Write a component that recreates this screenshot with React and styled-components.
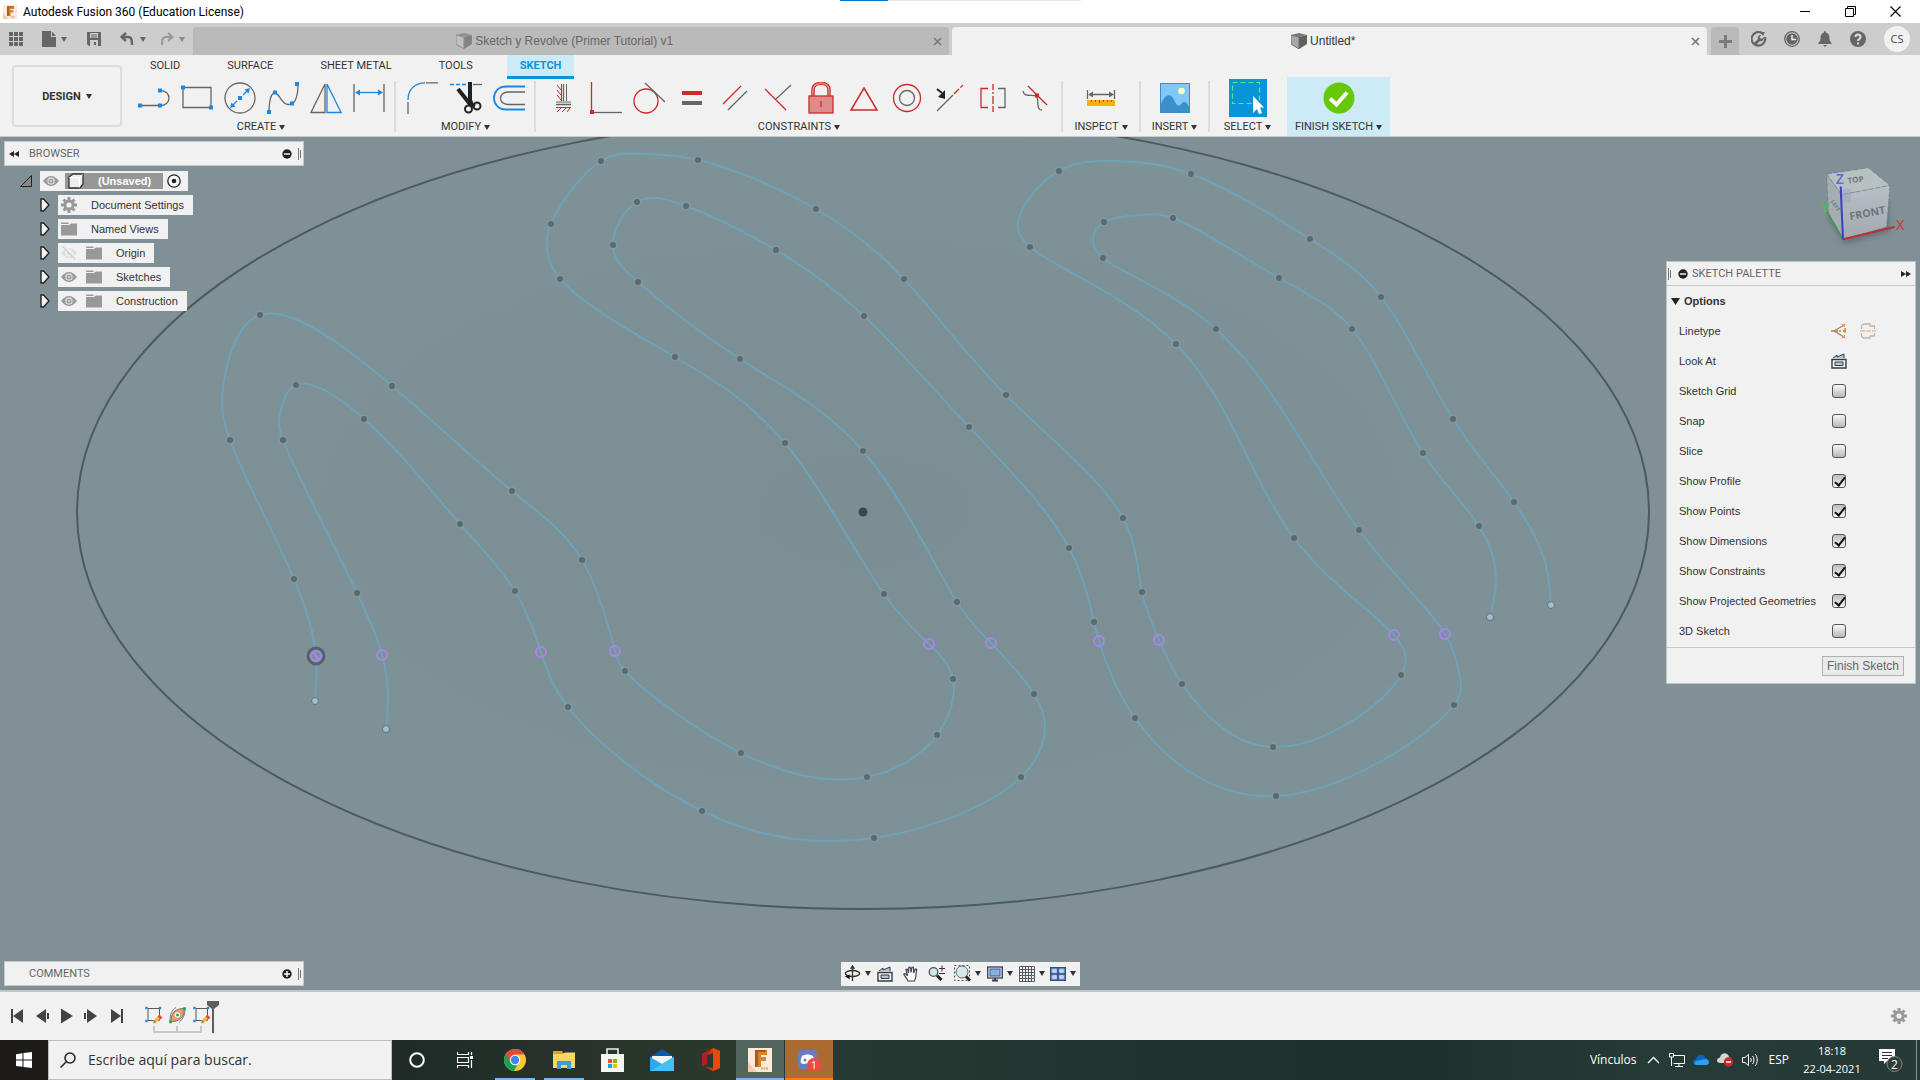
import React from "react";
import styled, { createGlobalStyle, css } from "styled-components";

const ui = '"Liberation Sans", Arial, sans-serif';
const caps = 'Roboto, "Liberation Sans", sans-serif';
const segoe = '"Open Sans", "Noto Sans", sans-serif';

const GlobalStyle = createGlobalStyle`
  * { box-sizing: border-box; }
  body { margin: 0; background: #f1f1f1; font-family: ${ui}; font-size: 11px; color: #333; }
  svg { display: block; flex: none; }
`;

const plainButton = css`
  appearance: none;
  border: 0;
  padding: 0;
  margin: 0;
  background: none;
  color: inherit;
  font: inherit;
  cursor: pointer;
`;

const Shell = styled.div`
  display: flex;
  flex-direction: column;
  height: 100vh;
  min-height: 720px;
  overflow: hidden;
`;

/* ---------- generic pieces ---------- */

const Svg = ({ w = 16, h = w, vw = w, vh = h, children, ...rest }) => (
  <svg width={w} height={h} viewBox={`0 0 ${vw} ${vh}`} fill="none" aria-hidden="true" {...rest}>
    {children}
  </svg>
);

const IconButton = styled.button`
  ${plainButton}
  display: flex;
  align-items: center;
  justify-content: center;
  width: ${(p) => p.$w || 16}px;
  height: ${(p) => p.$h || 16}px;
`;

const Caret = styled.span`
  display: inline-block;
  flex: none;
  border: solid transparent;
  border-width: 5px 3px 0;
  border-top-color: ${(p) => p.$color || "#333"};
`;

/* ---------- window title bar ---------- */

const TitleBar = styled.header`
  display: flex;
  align-items: center;
  flex: none;
  position: relative;
  height: 23px;
  padding: 0 17px 0 3px;
  background: #fff;
  color: #000;
`;

const TitleText = styled.h1`
  flex: 1;
  margin: 0 0 0 6px;
  font: 12px/16px ${caps};
`;

const WindowButtons = styled.div`
  display: flex;
  gap: 29px;
`;

const LoadStrip = styled.div`
  position: absolute;
  top: 0;
  left: 840px;
  width: 241px;
  height: 1px;
  background: linear-gradient(90deg, #0078d7 48px, #e5e5e5 48px);
`;

/* ---------- document tabs ---------- */

const TabBar = styled.nav`
  display: flex;
  flex: none;
  height: 32px;
  background: #cdcdcd;
`;

const QuickAccess = styled.div`
  display: flex;
  align-items: center;
  flex: none;
  width: 193px;
  padding: 0 0 0 8px;
`;

const QuickGap = styled.span`
  width: ${(p) => p.$w}px;
`;

const DocTab = styled.div`
  display: flex;
  flex: 1;
  align-items: center;
  margin: 4px 3px 0 0;
  padding: 0 7px 0 4px;
  border-radius: 4px 4px 0 0;
  background: ${(p) => (p.$active ? "#f1f1f1" : "#bababa")};
  color: ${(p) => (p.$active ? "#333" : "#666")};
`;

const DocName = styled.button`
  ${plainButton}
  display: flex;
  flex: 1;
  align-items: center;
  justify-content: center;
  gap: 3px;
  font-size: 12px;
  line-height: 16px;
`;

const NewTab = styled.button`
  ${plainButton}
  display: flex;
  align-items: center;
  justify-content: center;
  width: 28px;
  margin: 4px 0 0 1px;
  border-radius: 4px 4px 0 0;
  background: #bababa;
`;

const AccountBar = styled.div`
  display: flex;
  align-items: center;
  gap: 17px;
  padding: 0 10px 0 12px;
`;

const Avatar = styled.button`
  ${plainButton}
  width: 26px;
  height: 26px;
  margin-left: 1px;
  border-radius: 50%;
  background: #f1f1f1;
  color: #444;
  font: 11px/26px ${segoe};
`;

/* ---------- ribbon ---------- */

const Ribbon = styled.section`
  display: flex;
  flex: none;
  height: 82px;
  background: #f1f1f1;
  border-bottom: 1px solid #c8cccc;
  font-family: ${caps};
`;

const DesignButton = styled.button`
  ${plainButton}
  display: flex;
  align-items: center;
  justify-content: center;
  gap: 5px;
  flex: none;
  width: 110px;
  height: 62px;
  margin: 10px 5px 0 12px;
  border: 2px solid #dcdcdc;
  border-radius: 4px;
  font-weight: 700;
`;

const RibbonMain = styled.div`
  flex: 1;
  min-width: 0;
`;

const RibbonTabs = styled.div`
  display: flex;
  gap: 21px;
  height: 22px;
  padding-left: 10px;
`;

const RibbonTab = styled.button`
  ${plainButton}
  height: 24px;
  padding: 0 13px;
  border-bottom: 3px solid ${(p) => (p.$active ? "#0696d7" : "transparent")};
  background: ${(p) => (p.$active ? "#cdeaf7" : "none")};
  color: ${(p) => (p.$active ? "#0696d7" : "#333")};
  font-weight: ${(p) => (p.$active ? 700 : 400)};
  line-height: 22px;
`;

const Groups = styled.div`
  display: flex;
  height: 59px;
`;

const Group = styled.div`
  display: flex;
  flex-direction: column;
  align-items: center;
  min-width: ${(p) => p.$min || 0}px;
  margin-left: ${(p) => (p.$accent ? 2 : 0)}px;
  padding: ${(p) => (p.$min ? "2px 0 0" : "2px 4px 0 5px")};
  background: ${(p) => (p.$accent ? "#cdeaf7" : "none")};
`;

const Divider = styled.span`
  width: 2px;
  height: 51px;
  margin-top: 4px;
  background: #dcdcdc;
`;

const Tools = styled.div`
  display: flex;
  height: 38px;
`;

const Tool = styled.button`
  ${plainButton}
  display: flex;
  flex: none;
  align-items: center;
  justify-content: center;
  width: 43px;
  height: 38px;
`;

const GroupLabel = styled.button`
  ${plainButton}
  display: flex;
  flex: none;
  align-items: center;
  gap: 3px;
  height: 20px;
  line-height: 20px;
  white-space: nowrap;
`;

/* ---------- canvas ---------- */

const Canvas = styled.main`
  position: relative;
  display: flex;
  flex: 1;
  flex-direction: column;
  min-height: 0;
  background: #819097;
  overflow: hidden;
`;

const Drawing = styled.svg`
  position: absolute;
  inset: 0;
  width: 100%;
  height: 100%;
`;

const Overlay = styled.div`
  position: relative;
  display: flex;
  flex: 1;
  justify-content: space-between;
  padding: 4px 4px 0;
`;

const Dock = styled.div`
  position: relative;
  display: grid;
  grid-template-columns: 1fr auto 1fr;
  align-items: center;
  padding: 0 4px 4px;
`;

const PanelBar = styled.div`
  display: flex;
  align-items: center;
  width: 300px;
  height: 25px;
  padding: 0 1px 0 4px;
  border: 1px solid #c8c8c8;
  background: #f1f1f1;
  color: #666;
  font: 11px/16px ${caps};
`;

const PanelTitle = styled.h2`
  flex: 1;
  margin: 0 0 0 ${(p) => p.$indent || 0}px;
  font: inherit;
`;

const Tree = styled.ul`
  display: flex;
  flex-direction: column;
  gap: 4px;
  margin: 5px 0 0;
  padding: 0;
  list-style: none;
`;

const TreeRow = styled.li`
  display: flex;
  align-items: center;
  height: 20px;
  padding-left: ${(p) => (p.$root ? 16 : 36)}px;
`;

const TreeBox = styled.div`
  display: flex;
  align-items: center;
  height: 20px;
  margin-left: 8px;
  padding: 0 ${(p) => (p.$root ? 7 : 9)}px 0 3px;
  background: #f1f1f1;
  line-height: 20px;
`;

const TreeName = styled.span`
  margin-left: 14px;
`;

const FolderSlot = styled.span`
  margin-left: 9px;
`;

const RootName = styled.button`
  ${plainButton}
  display: flex;
  align-items: center;
  gap: 14px;
  width: 98px;
  height: 16px;
  margin: 0 4px 0 6px;
  padding-left: 3px;
  background: #979797;
  color: #fff;
  font-weight: 700;
`;

const Right = styled.div`
  display: flex;
  flex-direction: column;
  align-items: flex-end;
  padding-top: 19px;
`;

const CubeBox = styled.div`
  margin-right: 10px;
`;

const Palette = styled.section`
  width: 250px;
  margin-top: 11px;
  border: 1px solid #c0c4c4;
  background: #f1f1f1;
`;

const PaletteHead = styled.div`
  display: flex;
  align-items: center;
  height: 24px;
  padding: 0 4px 0 1px;
  border-bottom: 1px solid #c8c8c8;
  color: #666;
  font: 11px/16px ${caps};
`;

const OptionsHead = styled.button`
  ${plainButton}
  display: flex;
  align-items: center;
  gap: 4px;
  height: 30px;
  padding-left: 4px;
  font-weight: 700;
`;

const OptionRow = styled.label`
  display: flex;
  align-items: center;
  height: 30px;
  padding-left: 12px;
`;

const OptionName = styled.span`
  width: 152px;
  white-space: nowrap;
`;

const OptionIcons = styled.span`
  display: flex;
  gap: 13px;
`;

const Check = styled.input`
  appearance: none;
  position: relative;
  width: 14px;
  height: 14px;
  margin: 0 0 0 1px;
  border: 1px solid #555;
  border-radius: 3px;
  background: ${(p) => (p.defaultChecked ? "linear-gradient(#bdbdbd, #f4f4f4)" : "linear-gradient(#f8f8f8, #b8b8b8)")};
  &:checked::after {
    content: "";
    position: absolute;
    left: 4px;
    top: 0;
    width: 4px;
    height: 9px;
    border: solid #111;
    border-width: 0 2px 2px 0;
    transform: rotate(38deg);
  }
`;

const PaletteFoot = styled.div`
  display: flex;
  justify-content: flex-end;
  margin-top: 1px;
  padding: 8px 11px 7px;
  border-top: 1px solid #c8c8c8;
`;

const FinishButton = styled.button`
  ${plainButton}
  width: 82px;
  height: 20px;
  border: 1px solid #b0b0b0;
  background: #eaeaea;
  color: #666;
  font-size: 12px;
  line-height: 18px;
`;

const NavBar = styled.div`
  display: flex;
  align-items: center;
  height: 24px;
  padding: 0 4px 0 3px;
  background: #f1f1f1;
`;

const NavTool = styled.button`
  ${plainButton}
  display: flex;
  align-items: center;
  gap: 4px;
  margin-right: ${(p) => p.$gap}px;
`;

/* ---------- timeline ---------- */

const Timeline = styled.section`
  display: flex;
  align-items: center;
  flex: none;
  height: 50px;
  padding: 0 13px 0 9px;
  border-top: 2px solid #c4c6c6;
  background: #f1f1f1;
`;

const Playback = styled.div`
  display: flex;
  gap: 9px;
  margin-right: 20px;
`;

const Spacer = styled.span`
  flex: 1;
`;

/* ---------- taskbar ---------- */

const Taskbar = styled.footer`
  display: flex;
  flex: none;
  height: 40px;
  background: linear-gradient(90deg, #1f2a28 20%, #29352b 33%, #2a382d 38%, #263a34 44%, #20322d 60%, #1f312e 75%, #263b35 86%, #253a38 100%);
  color: #fff;
  font-family: ${segoe};
`;

const StartButton = styled.button`
  ${plainButton}
  display: flex;
  align-items: center;
  justify-content: center;
  width: 48px;
  background: #1c1b19;
`;

const Search = styled.label`
  display: flex;
  align-items: center;
  gap: 12px;
  width: 344px;
  padding-left: 11px;
  border: 1px solid #bcbcbc;
  background: #f1f1f1;
`;

const SearchInput = styled.input`
  flex: 1;
  min-width: 0;
  padding: 0;
  border: 0;
  outline: 0;
  background: none;
  font: 14px/20px ${segoe};
  &::placeholder { color: #333; opacity: 1; }
`;

const Apps = styled.div`
  display: flex;
  flex: 1;
  gap: 1px;
  padding-left: 1px;
`;

const App48 = styled.button`
  ${plainButton}
  display: flex;
  align-items: center;
  justify-content: center;
  width: 48px;
  background: ${(p) => p.$bg || "none"};
  background-image: ${(p) =>
    p.$line ? `linear-gradient(${p.$line}, ${p.$line})` : "none"};
  background-repeat: no-repeat;
  background-position: bottom;
  background-size: ${(p) => p.$lineWidth || 40}px 2px;
`;

const Tray = styled.div`
  display: flex;
  align-items: center;
  font-size: 12px;
  line-height: 18px;
`;

const TrayItem = styled.button`
  ${plainButton}
  display: flex;
  align-items: center;
  margin-right: ${(p) => p.$gap || 0}px;
`;

const Clock = styled.time`
  width: 64px;
  margin-right: 14px;
  font-size: 11px;
  text-align: center;
`;

const ShowDesktop = styled.button`
  ${plainButton}
  width: 4px;
  height: 40px;
  margin-left: 13px;
  border-left: 1px solid #8b9795;
`;

/* ---------- small icons ---------- */

const G = "#666";
const B = "#1c87e0";
const R = "#cc2a2a";

const FusionLogo = ({ size = 14 }) => (
  <Svg w={size} vw={24} vh={24}>
    <rect width="24" height="24" fill="#fbe9d9" />
    <path d="M0 14 L9 24 H0z" fill="#f3cfae" />
    <path d="M7 2H19V7H13V9H18V13H13V19H7z" fill="#d98234" />
    <path d="M7 2H19L17 4H10V18L7 19z" fill="#a85a1d" />
    <path d="M13 20.500H20" stroke="#e2b184" strokeWidth="2.500" strokeDasharray="2 0.500" />
  </Svg>
);

const Cube = ({ faded }) => (
  <Svg w={16}>
    <g opacity={faded ? 0.6 : 1}>
      <path d="M0 2 L8 0 L16 2 L8 4z" fill="#777" />
      <path d="M8 4 L16 2 V11 L8 16z" fill="#606060" />
      <path d="M0 2 L8 4 V16 L0 11z" fill={faded ? "#c4c4c4" : "#a8a8a8"} stroke="#707070" />
    </g>
  </Svg>
);

const Cross = () => (
  <Svg w={9}>
    <path d="M1 1 L8 8 M8 1 L1 8" stroke="#777" strokeWidth="1.6" />
  </Svg>
);

const Gear = ({ color = "#999" }) => (
  <Svg w={16}>
    <g stroke={color} strokeWidth="3">
      <path d="M8 0V16M0 8H16M2.5 2.5L13.5 13.5M13.5 2.5L2.5 13.5" />
    </g>
    <circle cx="8" cy="8" r="5.6" fill={color} />
    <circle cx="8" cy="8" r="2.6" fill="#f1f1f1" />
  </Svg>
);

const Eye = () => (
  <Svg w={16}>
    <path d="M0 8 Q8 -2 16 8 Q8 18 0 8z" fill="#999" />
    <circle cx="8" cy="8" r="3.600" fill="#f1f1f1" />
    <circle cx="8" cy="8" r="2.600" fill="#999" />
    <circle cx="8" cy="8" r="0.900" fill="#f1f1f1" />
  </Svg>
);

const EyeOff = () => (
  <Svg w={16}>
    <path d="M0 8 Q8 -2 16 8 Q8 18 0 8z" fill="#dedede" />
    <circle cx="8" cy="8" r="3" fill="none" stroke="#f1f1f1" strokeWidth="1.500" />
    <path d="M3 1 L16 14" stroke="#f1f1f1" strokeWidth="1.800" />
    <path d="M1.500 1.500 L14.500 14.500" stroke="#d2d2d2" strokeWidth="1.600" />
  </Svg>
);

const Folder = () => (
  <Svg w={16}>
    <path d="M0 1.500 H7 L8 3 H0z" fill="#999" />
    <path d="M0 4 H8 L10 2.500 H16 V14.500 H0z" fill="#999" />
  </Svg>
);

const Expander = () => (
  <Svg w={10} h={14}>
    <path d="M1 1 H3.500 L9 7 L3.500 13 H1z" fill="#f4f4f4" stroke="#222" strokeWidth="1.400" />
  </Svg>
);

const RoundSign = ({ plus }) => (
  <Svg w={10}>
    <circle cx="5" cy="5" r="4.700" fill="#222" />
    <path d={plus ? "M2 5H8M5 2V8" : "M2 5H8"} stroke="#fff" strokeWidth="1.400" />
  </Svg>
);

const Grip = () => (
  <Svg w={4} h={12}>
    <path d="M0.500 0V12M2.500 2V10" stroke="#777" />
  </Svg>
);

const Chevrons = ({ flip }) => (
  <Svg w={10} h={6}>
    <path d={flip ? "M0 0V6L5 3z M5 0V6L10 3z" : "M5 0V6L0 3z M10 0V6L5 3z"} fill="#222" />
  </Svg>
);

/* ---------- ribbon icons, 32 x 32 ---------- */

const Dots = ({ at, color = B, s = 4 }) =>
  at.map(([x, y]) => <rect key={`${x}-${y}`} x={x - s / 2} y={y - s / 2} width={s} height={s} fill={color} />);

const I = ({ children }) => <Svg w={32}><g strokeWidth="1.300">{children}</g></Svg>;

const createTools = [
  ["Line", <I><path d="M2 23.500H21M22 8.500C34 8.500 34 23.500 22 23.500" stroke={G} /><Dots at={[[2, 23.5], [22, 23.5], [22, 8.5]]} /></I>],
  ["Rectangle", <I><path d="M2 5.500H30V25.500H2z" stroke={G} /><Dots at={[[2, 5.5], [30, 25.5]]} /></I>],
  ["Circle", <I><circle cx="16" cy="16" r="15" stroke={G} /><path d="M8 24L13 19M19 13L24 8" stroke={B} /><path d="M26 6L24.500 11.500L20.500 7.500zM6 26L7.500 20.500L11.500 24.500z" fill={B} /><Dots at={[[16, 16]]} /></I>],
  ["Spline", <I><path d="M2 31C2 15 6 6 11 13S18 24 24 22S31 10 31 2" stroke={G} /><Dots at={[[2, 30], [8, 10.5], [25, 21.5], [30, 2]]} /></I>],
  ["Mirror", <I><path d="M15 2V30.500H1z" stroke={G} /><path d="M17 2V30.500H31z" stroke={B} /></I>],
  ["Sketch dimension", <I><path d="M1 2V30M31 2V30" stroke={G} /><path d="M4 10.500H28" stroke={B} /><path d="M2 10.500L7 7.500V13.500zM30 10.500L25 7.500V13.500z" fill={B} /></I>],
];

const modifyTools = [
  ["Fillet", <I><path d="M1 18C1 7 8 1 18 0.800" stroke={B} /><path d="M19 0.800H31M1 20V32" stroke={G} /></I>],
  ["Trim", <I><path d="M0 2.500H18" stroke={B} strokeDasharray="4 2" /><path d="M23 2.500H32" stroke={G} /><path d="M20 0V18L22 23M8 7L20 22L25 24" stroke="#222" strokeWidth="4" /><circle cx="18.500" cy="27" r="3.500" stroke="#222" strokeWidth="2" /><circle cx="27" cy="24" r="3.500" stroke="#222" strokeWidth="2" /></I>],
  ["Offset", <I><path d="M32 4.500H13C-3 4.500 -3 27.500 13 27.500H32" stroke={B} strokeWidth="1.800" /><path d="M32 10H15C5 10 5 22.500 15 22.500H32" stroke={G} /></I>],
];

const constraintTools = [
  ["Horizontal/Vertical", <I><path d="M16.500 2V19M9 22.500H24" stroke={G} /><path d="M19.500 2V19M9 20H24" stroke={G} strokeWidth="1" /><path d="M14.500 2V19M9 25.500H24M10 3L14 8M10 8L14 13M10 13L14 18M10 30L14 26M15 30L19 26M20 30L23 26" stroke={R} strokeWidth="1" /></I>],
  ["Coincident", <I><path d="M3 30H1.500V0" stroke={R} /><path d="M4 30.500H32" stroke={G} /><Dots at={[[2, 30]]} color={R} /></I>],
  ["Tangent", <I><circle cx="13" cy="19" r="12" stroke={R} /><path d="M12 1L32 20" stroke={G} /></I>],
  ["Equal", <I><path d="M6 11H26" stroke={R} strokeWidth="4" /><path d="M6 21H26" stroke={G} strokeWidth="4" /></I>],
  ["Parallel", <I><path d="M4 22L22 4" stroke={R} /><path d="M9 28L28 9" stroke={G} /></I>],
  ["Perpendicular", <I><path d="M3 7L24 28" stroke={R} /><path d="M14 17L29 3" stroke={G} /></I>],
  ["Fix", <I><path d="M8 14V8C8 -1 24 -1 24 8V14" stroke={R} strokeWidth="3.500" /><path d="M8 14V8C8 -1 24 -1 24 8V14" stroke="#de8b8b" strokeWidth="1.500" /><rect x="4" y="14" width="24" height="17" fill="#de8b8b" stroke={R} /><path d="M16 19V25" stroke={R} /></I>],
  ["Midpoint", <I><path d="M16 6L29 28H3z" stroke={R} strokeWidth="1.500" /></I>],
  ["Concentric", <I><circle cx="16" cy="16" r="13.500" stroke={R} /><circle cx="16" cy="16" r="7.500" stroke={G} /></I>],
  ["Collinear", <I><path d="M3 29L19 13" stroke={G} /><path d="M20 12L29 3" stroke={R} strokeDasharray="7 2" /><path d="M3 7L8 11" stroke="#222" strokeWidth="2" /><path d="M11 17L4 15L11 8z" fill="#222" /></I>],
  ["Symmetry", <I><path d="M11 6.500H4V25.500H11M16 2V8M16 10V12M16 14V22M16 24V30" stroke={R} /><path d="M21 6.500H28V25.500H21" stroke={G} /></I>],
  ["Curvature", <I><path d="M3 9C4 16 12 12 16 14C20 17 15 28 22 28" stroke={G} /><path d="M8 4L27 23" stroke={R} /><Dots at={[[17, 13.5]]} color={R} /></I>],
];

const inspectIcon = (
  <I><path d="M2.500 8V17M29.500 8V17M5 12.500H27" stroke={G} /><path d="M3 12.500L8 9.500V15.500zM29 12.500L24 9.500V15.500z" fill={G} /><rect x="2" y="18" width="28" height="6" fill="#ffae0d" /><path d="M6.500 18V20M10.500 18V20M14.500 18V21M18.500 18V20M22.500 18V20M26.500 18V20" stroke="#8a6209" strokeWidth="1" /></I>
);

const insertIcon = (
  <Svg w={30}><rect x="0.500" y="0.500" width="29" height="29" fill="#80c7fb" stroke="#3a8ccc" /><path d="M1 21C5 12 10 9 14 17C17 24 19 24 22 20C25 17 27 20 29 24V29H1z" fill="#3a90cb" /><circle cx="21.500" cy="8" r="3.300" fill="#fdf9c8" /></Svg>
);

const selectIcon = (
  <Svg w={38}><rect width="38" height="38" fill="#0696d7" /><rect x="3.500" y="3.500" width="27" height="21" stroke="#6fdb8c" strokeWidth="1.200" strokeDasharray="5 3" /><path d="M24 17V34L28 30L30 35L33 34L31 28.500H35z" fill="#fff" /></Svg>
);

const finishIcon = (
  <Svg w={32}><circle cx="16" cy="16" r="15.500" fill="#66c808" /><path d="M7 16.500L13.500 22.500L24 10.500" stroke="#fff" strokeWidth="4" /></Svg>
);

/* ---------- sketch geometry ----------
   [x, y, kind]: "e" end point, "c" centre mark, "h" handle without a marker, none for a fit point */

const outerRoad = [
  [315, 701, "e"], [316, 656, "c"], [294, 579], [230, 440], [224, 381, "h"], [260, 315], [392, 386], [512, 491], [582, 560],
  [615, 651, "c"], [625, 671], [741, 753], [867, 777], [937, 735], [953, 679], [929, 644, "c"], [884, 594],
  [785, 443], [675, 357], [560, 279], [547, 248, "h"], [551, 224], [601, 161], [645, 154, "h"], [698, 160], [816, 209],
  [904, 279], [1006, 395], [1123, 518], [1142, 592], [1159, 640, "c"], [1182, 684], [1273, 747], [1401, 675],
  [1394, 635, "c"], [1294, 538], [1176, 344], [1030, 247], [1019, 218, "h"], [1059, 171], [1115, 161, "h"], [1191, 174],
  [1310, 239], [1381, 297], [1453, 419], [1514, 502], [1545, 562, "h"], [1551, 605, "e"],
];

const innerRoad = [
  [386, 729, "e"], [388, 693, "h"], [382, 655, "c"], [357, 593], [283, 440], [280, 414, "h"], [296, 385], [364, 419],
  [460, 524], [515, 591], [541, 652, "c"], [568, 707], [702, 811], [874, 838], [1021, 777], [1045, 728, "h"], [1034, 694],
  [991, 643, "c"], [957, 602], [863, 451], [740, 359], [638, 282], [613, 245], [637, 202], [686, 206], [776, 250],
  [864, 316], [969, 427], [1069, 548], [1094, 622], [1099, 641, "c"], [1135, 718], [1276, 796], [1454, 705],
  [1460, 677, "h"], [1445, 634, "c"], [1359, 530], [1216, 329], [1103, 258], [1093, 239, "h"], [1104, 222],
  [1142, 215, "h"], [1173, 218], [1279, 278], [1352, 329], [1423, 453], [1479, 526], [1496, 576, "h"], [1490, 617, "e"],
];

/* Natural cubic spline through the fit points, parameterised by the square root of chord length. */
function splinePath(points) {
  const n = points.length;
  const h = [];
  for (let i = 0; i < n - 1; i++) {
    h.push(Math.sqrt(Math.hypot(points[i + 1][0] - points[i][0], points[i + 1][1] - points[i][1])));
  }
  const slopes = (k) => {
    const a = [0], b = [2], c = [1], d = [(3 * (points[1][k] - points[0][k])) / h[0]];
    for (let i = 1; i < n - 1; i++) {
      a.push(h[i]);
      b.push(2 * (h[i - 1] + h[i]));
      c.push(h[i - 1]);
      d.push(3 * ((h[i] * (points[i][k] - points[i - 1][k])) / h[i - 1] + (h[i - 1] * (points[i + 1][k] - points[i][k])) / h[i]));
    }
    a.push(1); b.push(2); c.push(0);
    d.push((3 * (points[n - 1][k] - points[n - 2][k])) / h[n - 2]);
    for (let i = 1; i < n; i++) {
      const m = a[i] / b[i - 1];
      b[i] -= m * c[i - 1];
      d[i] -= m * d[i - 1];
    }
    const s = new Array(n);
    s[n - 1] = d[n - 1] / b[n - 1];
    for (let i = n - 2; i >= 0; i--) s[i] = (d[i] - c[i] * s[i + 1]) / b[i];
    return s;
  };
  const sx = slopes(0), sy = slopes(1);
  let path = `M${points[0][0]} ${points[0][1]}`;
  for (let i = 0; i < n - 1; i++) {
    const t = h[i] / 3;
    const [x0, y0] = points[i], [x1, y1] = points[i + 1];
    path += `C${x0 + sx[i] * t} ${y0 + sy[i] * t} ${x1 - sx[i + 1] * t} ${y1 - sy[i + 1] * t} ${x1} ${y1}`;
  }
  return path;
}

const FitPoint = ({ p: [x, y, kind] }) => {
  if (kind === "h") return null;
  if (kind === "c") return <circle cx={x} cy={y} r="5" stroke="#a884e8" strokeWidth="2" />;
  if (kind === "e") return <circle cx={x} cy={y} r="3.500" fill="#a9bcc4" stroke="#5f747c" />;
  return (
    <>
      <circle cx={x} cy={y} r="4" stroke="#8c9a98" strokeWidth="0.800" />
      <circle cx={x} cy={y} r="3" fill="#586b72" />
    </>
  );
};

const SketchDrawing = () => (
  <Drawing viewBox="0 137 1920 853" preserveAspectRatio="xMidYMid slice" fill="none" aria-label="Sketch">
    <defs>
      <radialGradient id="profile" cx="50%" cy="50%" r="55%">
        <stop offset="0" stopColor="#7b8e94" />
        <stop offset="1" stopColor="#7f9298" />
      </radialGradient>
    </defs>
    <ellipse cx="863" cy="512" rx="786" ry="397" fill="url(#profile)" stroke="#4b5b60" strokeWidth="2" />
    {[outerRoad, innerRoad].map((road) => (
      <path key={road[0][0]} d={splinePath(road)} stroke="#6fa2b8" strokeWidth="2" />
    ))}
    <circle cx="316" cy="656" r="8" stroke="#52636b" strokeWidth="3" />
    <path d="M313 653L319 659" stroke="#a884e8" strokeWidth="2" />
    {[...outerRoad, ...innerRoad].map((p) => <FitPoint key={`${p[0]}-${p[1]}`} p={p} />)}
    <circle cx="863" cy="512" r="4.500" fill="#3e4652" />
  </Drawing>
);

const ViewCube = () => (
  <svg width="90" height="90" viewBox="1128 480 270 270" role="img" aria-label="View cube">
    <defs>
      <linearGradient id="front" x1="0" y1="0" x2="0" y2="1">
        <stop offset="0" stopColor="#b9c0c5" />
        <stop offset="1" stopColor="#a1a9ae" />
      </linearGradient>
      <filter id="shade"><feGaussianBlur stdDeviation="8" /></filter>
    </defs>
    <path d="M1160 650L1215 735L1350 695L1345 600z" fill="#58646a" opacity="0.600" filter="url(#shade)" />
    <path d="M1160 522L1285 503L1350 556L1205 584z" fill="#b7c0c3" />
    <path d="M1160 522L1205 584L1209 718L1165 640z" fill="#a4adb2" />
    <path d="M1205 584L1350 556L1340 680L1209 718z" fill="url(#front)" />
    <path d="M1160 522L1285 503L1350 556L1205 584L1160 522L1165 640M1350 556L1340 680" fill="none" stroke="#6f787c" strokeWidth="2" strokeDasharray="16 4" />
    <rect x="1205" y="567" width="28" height="40" fill="#98a6ba" opacity="0.500" />
    <g fontFamily="Open Sans, sans-serif" fontWeight="700" fill="#6e767a">
      <text x="1231" y="661" fontSize="32" transform="rotate(-11 1231 661)">FRONT</text>
      <text x="1224" y="551" fontSize="24" transform="rotate(-8 1224 551)">TOP</text>
      <text x="1172" y="604" fontSize="16" transform="rotate(58 1172 604)">LEFT</text>
    </g>
    <path d="M1209 718L1162 636" stroke="#3d9a48" strokeWidth="5" />
    <path d="M1209 718L1364 681" stroke="#b93136" strokeWidth="6" />
    <path d="M1209 718L1202 560" stroke="#3a3fc4" strokeWidth="6" />
    <g fontFamily="Open Sans, sans-serif" fontWeight="600" fontSize="42">
      <text x="1187" y="552" fill="#6168dd">Z</text>
      <text x="1143" y="635" fill="#3fc14f">Y</text>
      <text x="1368" y="689" fill="#cc4347">X</text>
    </g>
  </svg>
);

/* ---------- navigation bar icons ---------- */

const LookAtIcon = () => (
  <Svg w={16}><path d="M1 6.500H15V15H1z" stroke="#333b44" strokeWidth="1.400" fill="#f4f4f4" /><path d="M4 9H12V12.500H4z" fill="#b9c3d6" stroke="#333b44" /><path d="M2 5L6 2V4L13 1V5" stroke="#333b44" fill="#b9c3d6" /></Svg>
);

const navTools = [
  ["Orbit", 6, true, <Svg w={17} vw={18} vh={18}><ellipse cx="9" cy="9" rx="7.500" ry="3.200" stroke="#333" strokeWidth="1.600" /><path d="M9 1V17M7 4L9 1L11 4" stroke="#333" strokeWidth="1.400" /><path d="M1 12L6 10V15z" fill="#111" /></Svg>],
  ["Look at", 10, false, <LookAtIcon />],
  ["Pan", 9, false, <Svg w={16}><path d="M5 15C4 12 1 10 0.800 8C2 7 3.500 8.500 4.500 10L3 3.500C4 2.500 5 3 5.500 7L5.800 1.500C7 0.500 7.800 1 8 6.500L9 1.200C10.200 0.600 11 1.200 10.500 7L12.500 3C13.800 2.600 14 3.500 13 8C13 12 12 13 11.500 15z" fill="#fff" stroke="#3b4450" strokeWidth="1.200" /></Svg>],
  ["Zoom", 9, false, <Svg w={17}><circle cx="5.500" cy="7" r="4.300" fill="#cfe5ea" stroke="#4b545c" strokeWidth="1.300" /><path d="M9 10.500L13.500 15" stroke="#222" strokeWidth="3" /><path d="M11 3.500H17M14 0.500V6.500M11 8.500H17" stroke="#333" /></Svg>],
  ["Zoom window", 6, true, <Svg w={17}><rect x="0.500" y="0.500" width="15" height="15" stroke="#555" strokeDasharray="2 2" /><circle cx="8" cy="7" r="6" fill="#d5e9ec" stroke="#5b6870" /><path d="M12 11.500L16 15.500" stroke="#222" strokeWidth="3" /></Svg>],
  ["Display settings", 6, true, <Svg w={16}><rect x="0.700" y="1" width="14.600" height="11" fill="#e4e9f0" stroke="#39414d" strokeWidth="1.300" /><rect x="3" y="3" width="10" height="7" fill="#8db0dc" stroke="#2f5ea6" /><path d="M5 14.500H11M8 12V14" stroke="#39414d" strokeWidth="2" /></Svg>],
  ["Grid and snaps", 5, true, <Svg w={16}><path d="M0.500 0.500H15.500V15.500H0.500zM3.500 0V16M6.500 0V16M9.500 0V16M12.500 0V16M0 3.500H16M0 6.500H16M0 9.500H16M0 12.500H16" stroke="#555b66" /></Svg>],
  ["Viewports", 0, true, <Svg w={16}><rect x="0.700" y="1.700" width="14.600" height="12.600" fill="#8db0dc" stroke="#2d4f86" strokeWidth="1.400" /><path d="M8 2V14M1 8H15" stroke="#2d4f86" strokeWidth="1.600" /><path d="M3 4H6V6H3zM10 4H13V6H10zM3 10H6V12H3zM10 10H13V12H10z" stroke="#dce8f6" /></Svg>],
];

const SketchFeature = ({ x }) => (
  <g transform={`translate(${x} 9)`}>
    <path d="M3 2.500H14.500V14.500H3z" stroke="#555" />
    <Dots at={[[1.5, 2], [15, 2], [1.5, 15]]} s={2.4} />
    <path d="M9 16.500L14 11.500" stroke="#f4b63e" strokeWidth="3.500" />
    <path d="M13.500 9.500L16.500 12.500" stroke="#f03e3e" strokeWidth="2.500" />
    <path d="M8 17.500L9.500 14.500L11 16z" fill="#777" />
  </g>
);

const options = [
  ["Sketch Grid", false], ["Snap", false], ["Slice", false], ["Show Profile", true], ["Show Points", true],
  ["Show Dimensions", true], ["Show Constraints", true], ["Show Projected Geometries", true], ["3D Sketch", false],
];

const treeItems = [
  ["Document Settings", "gear"], ["Named Views", "folder"], ["Origin", "hidden"], ["Sketches", "shown"], ["Construction", "shown"],
];

const playback = [
  ["Go to start", "M3 1V15", "M14 1V15L4 8z"],
  ["Step back", "M14 5V11", "M12 1V15L2 8z"],
  ["Play", "", "M2 0.500V15.500L14 8z"],
  ["Step forward", "M1 5V11", "M3 1V15L13 8z"],
  ["Go to end", "M13 1V15", "M2 1V15L12 8z"],
];

const RibbonGroup = ({ label, tools }) => (
  <Group>
    <Tools>
      {tools.map(([name, icon]) => <Tool key={name} aria-label={name}>{icon}</Tool>)}
    </Tools>
    <GroupLabel>{label}<Caret /></GroupLabel>
  </Group>
);

const SingleGroup = ({ label, icon, min, accent }) => (
  <Group $min={min} $accent={accent}>
    <Tool aria-label={label}>{icon}</Tool>
    <GroupLabel>{label}<Caret /></GroupLabel>
  </Group>
);

export default function App() {
  return (
    <Shell>
      <GlobalStyle />
      <TitleBar>
        <FusionLogo />
        <TitleText>Autodesk Fusion 360 (Education License)</TitleText>
        <WindowButtons>
          <IconButton aria-label="Minimize"><Svg w={11}><path d="M0 5.500H10" stroke="#000" /></Svg></IconButton>
          <IconButton aria-label="Restore"><Svg w={11}><path d="M0.500 2.500H8.500V10.500H0.500zM2.500 2.500V0.500H10.500V8.500H8.500" stroke="#000" /></Svg></IconButton>
          <IconButton aria-label="Close window"><Svg w={11}><path d="M0.500 0.500L10.500 10.500M10.500 0.500L0.500 10.500" stroke="#000" strokeWidth="1.200" /></Svg></IconButton>
        </WindowButtons>
        <LoadStrip />
      </TitleBar>

      <TabBar>
        <QuickAccess>
          <IconButton aria-label="Data panel">
            <Svg w={14}>{[0, 5, 10].map((x) => [0, 5, 10].map((y) => <rect key={`${x}-${y}`} x={x} y={y} width="4" height="4" fill={G} />))}</Svg>
          </IconButton>
          <QuickGap $w={17} />
          <IconButton aria-label="File"><Svg w={14} h={16}><path d="M0 0H9V6H14V16H0zM10 0.500L14 5H10z" fill={G} /></Svg></IconButton>
          <QuickGap $w={4} /><Caret $color={G} /><QuickGap $w={19} />
          <IconButton aria-label="Save"><Svg w={14}><path fillRule="evenodd" d="M0 0H14V14H2L0 12zM3 1V6H11V1zM3 8V14H11V8zM7 10H9V13H7z" fill={G} /><path d="M4 3H10M4 5H10" stroke={G} /></Svg></IconButton>
          <QuickGap $w={17} />
          <IconButton aria-label="Undo"><Svg w={14}><path d="M6 1L1.500 5L6 9M2 5H8C12 5 12 9 12 13" stroke={G} strokeWidth="2.400" /></Svg></IconButton>
          <QuickGap $w={5} /><Caret $color={G} /><QuickGap $w={13} />
          <IconButton aria-label="Redo"><Svg w={14}><path d="M8 1L12.500 5L8 9M12 5H6C2 5 2 9 2 13" stroke="#999" strokeWidth="2" /></Svg></IconButton>
          <QuickGap $w={4} /><Caret $color="#888" />
        </QuickAccess>
        <DocTab>
          <DocName><Cube faded />Sketch y Revolve (Primer Tutorial) v1</DocName>
          <IconButton aria-label="Close Sketch y Revolve" $w={9}><Cross /></IconButton>
        </DocTab>
        <DocTab $active>
          <DocName><Cube />Untitled*</DocName>
          <IconButton aria-label="Close Untitled" $w={9}><Cross /></IconButton>
        </DocTab>
        <NewTab aria-label="New tab"><Svg w={13}><path d="M6.500 0V13M0 6.500H13" stroke="#7b7b7b" strokeWidth="3" /></Svg></NewTab>
        <AccountBar>
          <IconButton aria-label="Extensions"><Svg w={16}><path d="M11 2A6.800 6.800 0 1 0 14 6" stroke={G} strokeWidth="2.200" /><path d="M3 12L7 8C6 5 8 4 10 4L8.500 6.500L10.500 8L13 6C13 9 11 11 9 10L5 14z" fill={G} /><path d="M9 1L14 1L12 5z" fill={G} /></Svg></IconButton>
          <IconButton aria-label="Job status"><Svg w={16}><circle cx="8" cy="8" r="7.300" stroke={G} strokeWidth="1.300" /><circle cx="8" cy="8" r="5.800" fill={G} /><path d="M8 4V8.500H12" stroke="#eee" strokeWidth="1.500" /></Svg></IconButton>
          <IconButton aria-label="Notifications"><Svg w={16}><path d="M8 0C9 0 9 1 9 1.500C12 2.500 12.500 5 12.500 8C12.500 10 14 11 15 13H1C2 11 3.500 10 3.500 8C3.500 5 4 2.500 7 1.500C7 1 7 0 8 0zM6 14H10L8 16z" fill={G} /></Svg></IconButton>
          <IconButton aria-label="Help"><Svg w={16}><circle cx="8" cy="8" r="8" fill={G} /><path d="M5.500 6C5.500 2.500 10.500 2.500 10.500 6C10.500 8 8 8 8 10" stroke="#ddd" strokeWidth="2" /><rect x="7" y="11.500" width="2" height="2" fill="#ddd" /></Svg></IconButton>
          <Avatar>CS</Avatar>
        </AccountBar>
      </TabBar>

      <Ribbon>
        <DesignButton>DESIGN<Caret /></DesignButton>
        <RibbonMain>
          <RibbonTabs>
            {["SOLID", "SURFACE", "SHEET METAL", "TOOLS", "SKETCH"].map((t) => (
              <RibbonTab key={t} $active={t === "SKETCH"}>{t}</RibbonTab>
            ))}
          </RibbonTabs>
          <Groups>
            <RibbonGroup label="CREATE" tools={createTools} />
            <Divider />
            <RibbonGroup label="MODIFY" tools={modifyTools} />
            <Divider />
            <RibbonGroup label="CONSTRAINTS" tools={constraintTools} />
            <Divider />
            <SingleGroup label="INSPECT" icon={inspectIcon} min={76} />
            <Divider />
            <SingleGroup label="INSERT" icon={insertIcon} min={67} />
            <Divider />
            <SingleGroup label="SELECT" icon={selectIcon} min={75} />
            <SingleGroup label="FINISH SKETCH" icon={finishIcon} min={103} accent />
          </Groups>
        </RibbonMain>
      </Ribbon>

      <Canvas>
        <SketchDrawing />
        <Overlay>
          <div>
            <PanelBar>
              <Chevrons />
              <PanelTitle $indent={10}>BROWSER</PanelTitle>
              <IconButton aria-label="Collapse browser"><RoundSign /></IconButton>
              <QuickGap $w={3} /><Grip />
            </PanelBar>
            <Tree>
              <TreeRow $root>
                <Svg w={12}><path d="M11.500 0.500V11.500H0.500z" fill="#888" stroke="#222" /></Svg>
                <TreeBox $root>
                  <Eye />
                  <RootName>
                    <Svg w={16}><path d="M1 4L5 1H15V11L12 15H1z" fill="#eceef0" stroke="#333" strokeWidth="1.300" /><path d="M1.500 4.500H11.500V14.500M11.500 4.500L14.500 1.500" stroke="#fff" /></Svg>
                    (Unsaved)
                  </RootName>
                  <Svg w={14}><circle cx="7" cy="7" r="6.200" stroke="#222" strokeWidth="1.300" fill="#fff" /><circle cx="7" cy="7" r="2.300" fill="#222" /></Svg>
                </TreeBox>
              </TreeRow>
              {treeItems.map(([name, kind]) => (
                <TreeRow key={name}>
                  <Expander />
                  <TreeBox>
                    {kind === "gear" && <Gear />}
                    {kind === "folder" && <Folder />}
                    {kind === "hidden" && <EyeOff />}
                    {kind === "shown" && <Eye />}
                    {(kind === "hidden" || kind === "shown") && <FolderSlot><Folder /></FolderSlot>}
                    <TreeName>{name}</TreeName>
                  </TreeBox>
                </TreeRow>
              ))}
            </Tree>
          </div>

          <Right>
            <CubeBox><ViewCube /></CubeBox>
            <Palette>
              <PaletteHead>
                <Grip />
                <QuickGap $w={3} />
                <IconButton aria-label="Collapse palette"><RoundSign /></IconButton>
                <PanelTitle $indent={1}>SKETCH PALETTE</PanelTitle>
                <Chevrons flip />
              </PaletteHead>
              <OptionsHead>
                <Svg w={9} h={7}><path d="M0 0H9L4.500 7z" fill="#222" /></Svg>
                Options
              </OptionsHead>
              <OptionRow as="div">
                <OptionName>Linetype</OptionName>
                <OptionIcons>
                  <IconButton aria-label="Construction line"><Svg w={16}><path d="M14 1.500L3 8L14 14.500" stroke="#888" strokeWidth="1.300" /><path d="M0 8H10M12 8H16M14 5V10" stroke="#e07b1f" strokeWidth="1.300" strokeDasharray="3 1" /><path d="M10.500 1L14 4M14 0.500L10.500 4M10.500 12L14 15.500M14 12L10.500 15.500" stroke="#ee8a3c" /></Svg></IconButton>
                  <IconButton aria-label="Centerline"><Svg w={16}><path d="M1.500 6V3L3.500 1H10V3H14.500V6M1.500 10V13L3.500 15H10V13H14.500V10" stroke="#b8b8b8" strokeWidth="1.300" /><path d="M0 8H16" stroke="#f3b98a" strokeWidth="1.300" strokeDasharray="5 1" /></Svg></IconButton>
                </OptionIcons>
              </OptionRow>
              <OptionRow as="div">
                <OptionName>Look At</OptionName>
                <IconButton aria-label="Look at"><LookAtIcon /></IconButton>
              </OptionRow>
              {options.map(([name, on]) => (
                <OptionRow key={name}>
                  <OptionName>{name}</OptionName>
                  <Check type="checkbox" defaultChecked={on} />
                </OptionRow>
              ))}
              <PaletteFoot><FinishButton>Finish Sketch</FinishButton></PaletteFoot>
            </Palette>
          </Right>
        </Overlay>
        <Dock>
          <PanelBar>
            <PanelTitle $indent={20}>COMMENTS</PanelTitle>
            <IconButton aria-label="Expand comments"><RoundSign plus /></IconButton>
            <QuickGap $w={3} /><Grip />
          </PanelBar>
          <NavBar>
            {navTools.map(([name, gap, menu, icon]) => (
              <NavTool key={name} $gap={gap} aria-label={name}>{icon}{menu && <Caret />}</NavTool>
            ))}
          </NavBar>
        </Dock>
      </Canvas>

      <Timeline>
        <Playback>
          {playback.map(([name, bar, tri]) => (
            <IconButton key={name} aria-label={name}>
              <Svg w={16}><path d={bar} stroke="#444" strokeWidth="2" /><path d={tri} fill="#444" /></Svg>
            </IconButton>
          ))}
        </Playback>
        <Svg w={80} h={38}>
          <SketchFeature x={0} />
          <g transform="translate(24 9)">
            <path d="M2 15.500C2 6 7 2.500 15 2.500C16 10 11 16 2 15.500z" fill="#eb9a62" stroke="#777" />
            <path d="M7 1.500C3 4 1 8 1 15M16 3C16 9 14 13 10 16.500" stroke="#777" />
            <circle cx="8.500" cy="9" r="2.800" fill="#fff" />
            <Dots at={[[8.5, 9], [15.5, 2.5], [1.5, 16]]} color="#17a84a" s={2.6} />
          </g>
          <SketchFeature x={48} />
          <path d="M9 29V35H56V29M32 29V35" stroke="#c8c8c8" strokeWidth="2" />
          <path d="M62 4H74V8L69 12V36H67V12L62 8z" fill="#5e5e5e" />
        </Svg>
        <Spacer />
        <IconButton aria-label="Timeline settings"><Gear /></IconButton>
      </Timeline>

      <Taskbar>
        <StartButton aria-label="Start"><Svg w={16}><path d="M0 2.200L6.500 1.300V7.600H0zM7.500 1.100L16 0V7.600H7.500zM0 8.500H6.500V14.800L0 13.900zM7.500 8.500H16V16L7.500 14.900z" fill="#fff" /></Svg></StartButton>
        <Search>
          <Svg w={16}><circle cx="10" cy="6" r="5" stroke="#222" strokeWidth="1.500" /><path d="M6.500 9.500L0.500 15.500" stroke="#222" strokeWidth="1.500" /></Svg>
          <SearchInput placeholder="Escribe aquí para buscar." />
        </Search>
        <Apps>
          <App48 aria-label="Cortana"><Svg w={16}><circle cx="8" cy="8" r="6.800" stroke="#fff" strokeWidth="2" /></Svg></App48>
          <App48 aria-label="Task view"><Svg w={19} h={16}><path d="M0.500 0V2.500H11.500V0M0.500 16V13.500H11.500V16M0.500 5.500H11.500V10.500H0.500zM14.500 0V3M14.500 8V16" stroke="#fff" strokeWidth="1.200" /><rect x="13" y="4" width="3" height="3" fill="#fff" /></Svg></App48>
          <App48 aria-label="Chrome" $line="#76b9ed">
            <Svg w={22}><circle cx="11" cy="11" r="11" fill="#fcc934" /><path d="M11 11L1.500 5.500A11 11 0 0 0 10 22L15 13z" fill="#1aa05a" /><path d="M11 5.500H20.500A11 11 0 0 0 1.500 5.500L6 12z" fill="#dd4b3e" /><circle cx="11" cy="11" r="5.200" fill="#fff" /><circle cx="11" cy="11" r="4.200" fill="#4285f4" /></Svg>
          </App48>
          <App48 aria-label="File Explorer" $line="#76b9ed">
            <Svg w={22} h={18}><path d="M0 0H9L10 2H22V17H0z" fill="#e0a313" /><path d="M0 3H10L12 1.500H22V17H0z" fill="#fbd667" /><path d="M4 18V10H18V18H14V14H8V18z" fill="#3d9be2" /></Svg>
          </App48>
          <App48 aria-label="Microsoft Store">
            <Svg w={24}><path d="M6 6V1H17V6" stroke="#eee" strokeWidth="1.600" /><path d="M0 6H23V24H0z" fill="#f5f5f5" /><path d="M7 11H11V15H7z" fill="#f25022" /><path d="M12 11H16V15H12z" fill="#7fba00" /><path d="M7 16H11V20H7z" fill="#00a4ef" /><path d="M12 16H16V20H12z" fill="#ffb900" /></Svg>
          </App48>
          <App48 aria-label="Mail">
            <Svg w={24} h={22}><path d="M0 8L12 0L24 8V10H0z" fill="#0a5aa8" /><path d="M2 7H22V16H2z" fill="#f3f3f3" /><path d="M0 8L12 15L24 8V22H0z" fill="#2aa9ec" /><path d="M24 8L0 22H24z" fill="#41c1f6" /></Svg>
          </App48>
          <App48 aria-label="Office">
            <Svg w={20} h={24}><path d="M12 0L19 3V20L12 23L4 19L12 20V5L6 7V16L1 18V6z" fill="#d83b01" /><path d="M12 0L6 7V16L1 18V6z" fill="#b51a2b" /><path d="M12 0L19 3V20L12 23z" fill="#e8490f" /></Svg>
          </App48>
          <App48 aria-label="Fusion 360" $bg="#52655f" $line="#76b9ed" $lineWidth={48}><FusionLogo size={24} /></App48>
          <App48 aria-label="Discord, 1 notification" $bg="#ab6b31" $line="#ff7a00" $lineWidth={48}>
            <Svg w={24}>
              <rect x="1" y="2" width="19" height="19" rx="4" fill="#6a7bbf" />
              <path d="M5 8C9 6 12 6 16 8C17 11 18 13 17 15C14 17 13 15 11 15S7 17 4 15C3 13 4 11 5 8z" fill="#fff" />
              <circle cx="8" cy="12" r="1.500" fill="#6a7bbf" />
              <circle cx="17" cy="17" r="7" fill="#f04747" />
              <text x="17" y="21" fontSize="11" fontFamily="Open Sans, sans-serif" fill="#fff" textAnchor="middle">1</text>
            </Svg>
          </App48>
        </Apps>
        <Tray>
          <TrayItem $gap={10}>Vínculos</TrayItem>
          <TrayItem $gap={9} aria-label="Hidden icons"><Svg w={13} h={8}><path d="M1 7L6.500 1.500L12 7" stroke="#fff" strokeWidth="1.400" /></Svg></TrayItem>
          <TrayItem $gap={8} aria-label="Network"><Svg w={16}><path d="M5 3.500H15.500V11.500H4.500M10 12V14.500M6 14.500H14M0.500 1.500H4.500V5H0.500zM2.500 5V14" stroke="#fff" /></Svg></TrayItem>
          <TrayItem $gap={8} aria-label="OneDrive"><Svg w={16} h={12}><path d="M3 11C-1 11 -1 5 3 5C4 0 11 -1 12 4C17 4 17 11 13 11z" fill="#0a64c2" /><path d="M3 11C1 10 1 7 5 6.500L12 5C17 5 17 11 13 11z" fill="#2d9fea" /></Svg></TrayItem>
          <TrayItem $gap={8} aria-label="Sync stopped"><Svg w={17} h={14}><path d="M3 10C-1 10 -1 5 3 4.500C4 -1 11 -1 12 4C16 5 15 10 12 10z" fill="#d4d4d4" /><circle cx="11.500" cy="9" r="4.700" fill="#d4232f" /><path d="M9 9H14" stroke="#fff" strokeWidth="1.500" /></Svg></TrayItem>
          <TrayItem $gap={10} aria-label="Volume"><Svg w={17} h={14}><path d="M0.500 4.500H3L6.500 1.500V12.500L3 9.500H0.500zM8.500 5C9.500 6 9.500 8 8.500 9M10.500 3C12.500 5 12.500 9 10.500 11M13 1C16 4 16 10 13 13" stroke="#fff" /></Svg></TrayItem>
          <TrayItem $gap={11}>ESP</TrayItem>
          <Clock>18:18<br />22-04-2021</Clock>
          <TrayItem aria-label="2 notifications">
            <Svg w={25} h={24}>
              <path d="M1 1H17V13H9L6 16V13H1z" fill="#fff" />
              <path d="M4 4.500H14M4 7.500H14M4 10.500H10" stroke="#253a38" />
              <circle cx="16.500" cy="16" r="7.500" fill="#2d3d3b" stroke="#7d8886" />
              <text x="16.500" y="20.500" fontSize="12" fontFamily="Open Sans, sans-serif" fill="#fff" textAnchor="middle">2</text>
            </Svg>
          </TrayItem>
          <ShowDesktop aria-label="Show desktop" />
        </Tray>
      </Taskbar>
    </Shell>
  );
}
